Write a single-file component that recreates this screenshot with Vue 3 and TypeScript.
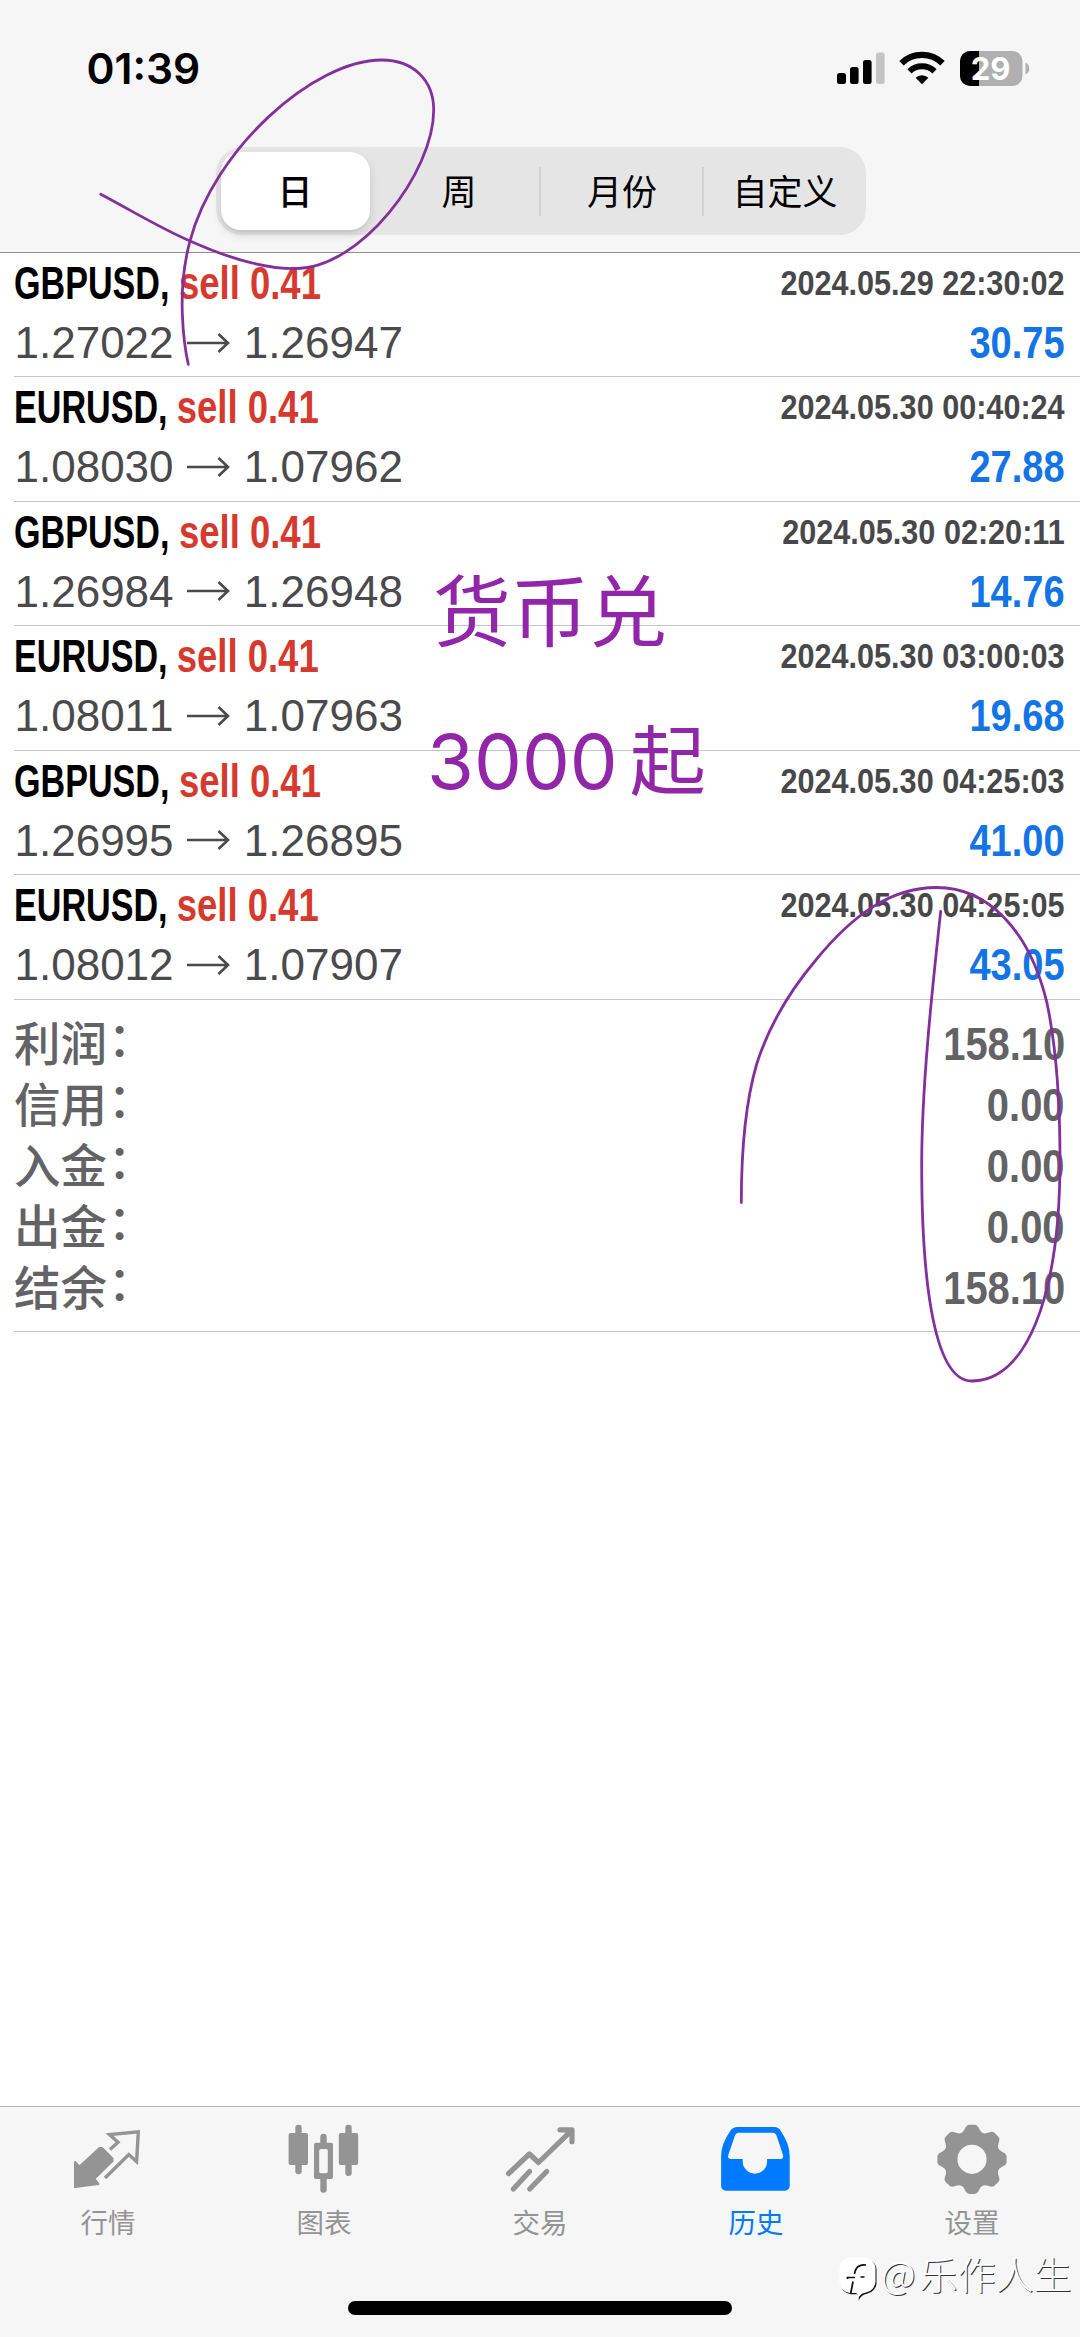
<script setup lang="ts">
interface Deal {
  symbol: string
  volume: string
  open: string
  close: string
  time: string
  profit: string
}

const periods: string[] = ['日', '周', '月份', '自定义']

const deals: Deal[] = [
  { symbol: 'GBPUSD', volume: '0.41', open: '1.27022', close: '1.26947', time: '2024.05.29 22:30:02', profit: '30.75' },
  { symbol: 'EURUSD', volume: '0.41', open: '1.08030', close: '1.07962', time: '2024.05.30 00:40:24', profit: '27.88' },
  { symbol: 'GBPUSD', volume: '0.41', open: '1.26984', close: '1.26948', time: '2024.05.30 02:20:11', profit: '14.76' },
  { symbol: 'EURUSD', volume: '0.41', open: '1.08011', close: '1.07963', time: '2024.05.30 03:00:03', profit: '19.68' },
  { symbol: 'GBPUSD', volume: '0.41', open: '1.26995', close: '1.26895', time: '2024.05.30 04:25:03', profit: '41.00' },
  { symbol: 'EURUSD', volume: '0.41', open: '1.08012', close: '1.07907', time: '2024.05.30 04:25:05', profit: '43.05' },
]

const totals: { label: string; value: string }[] = [
  { label: '利润', value: '158.10' },
  { label: '信用', value: '0.00' },
  { label: '入金', value: '0.00' },
  { label: '出金', value: '0.00' },
  { label: '结余', value: '158.10' },
]

const tabs: { id: string; label: string }[] = [
  { id: 'quotes', label: '行情' },
  { id: 'chart', label: '图表' },
  { id: 'trade', label: '交易' },
  { id: 'history', label: '历史' },
  { id: 'settings', label: '设置' },
]
const activeTab = 'history'

// Freehand pen loops drawn over the page
const penStrokes: string[] = [
  'M100.700 194.300C136 213 160 228 190 241C228 258 262 268.700 295 268.700C361 268.700 433.700 172 433.700 110C433.700 80 413 60 381.700 60C313 60 214 150 190 241C183 267 181.500 290 182.300 313C183 332 185 350 188.300 364.300',
  'M741.300 1202.500C741.300 1150 745 1104 756.700 1064C770 1022 793 987 816.700 959C852 916 890 887.500 936.700 887.500C988 887.500 1029 930 1046.700 1001.800C1056 1045 1060 1105 1060 1160C1060 1300 1025 1381 971.700 1381C930 1381 921.700 1260 921.700 1165C921.700 1090 931 1000 940.700 911.400',
]
</script>

<template>
  <div class="screen">
    <header class="top">
      <div class="status">
        <span class="clock">01:39</span>
        <svg class="status-icons" width="196" height="40" viewBox="0 0 196 40">
          <rect x="1" y="23" width="9" height="11" rx="2.5" />
          <rect x="14" y="17" width="8.6" height="17" rx="2.5" />
          <rect x="27" y="10" width="8.6" height="24" rx="2.5" />
          <rect x="40" y="2.5" width="8.6" height="31.5" rx="2.5" fill="#c4c4c4" />
          <g fill="none" stroke="#000">
            <path d="M65.500 13.200A29.500 29.500 0 0 1 106.500 13.200" stroke-width="6.400" />
            <path d="M73.500 21.400A18 18 0 0 1 98.500 21.400" stroke-width="6" />
          </g>
          <path d="M86 34.200L79.600 27.800A9.200 9.200 0 0 1 92.400 27.800Z" />
          <rect x="124" y="1" width="62.500" height="35" rx="10" fill="#b0b0b0" />
          <path d="M134 1H143V36H134A10 10 0 0 1 124 26V11A10 10 0 0 1 134 1Z" />
          <path d="M189.500 12.500C194.500 14.500 194.500 22.500 189.500 24.500Z" fill="#b0b0b0" />
          <text x="154.500" y="29.500" text-anchor="middle" class="battery">29</text>
        </svg>
      </div>
      <nav class="segments">
        <div v-for="(p, i) in periods" :key="p" class="segment" :class="{ on: i === 0 }">{{ p }}</div>
      </nav>
    </header>

    <main class="history">
      <section v-for="d in deals" :key="d.time" class="deal">
        <div class="line head">
          <span class="name">{{ d.symbol }}, <span class="vol">sell {{ d.volume }}</span></span>
          <span class="time">{{ d.time }}</span>
        </div>
        <div class="line body">
          <span class="prices">
            <span>{{ d.open }}</span>
            <svg class="arrow" width="44" height="24" viewBox="0 0 44 24">
              <path d="M1 12H42M32.500 3L42 12L32.500 21" />
            </svg>
            <span>{{ d.close }}</span>
          </span>
          <span class="profit">{{ d.profit }}</span>
        </div>
      </section>
      <section class="totals">
        <div v-for="t in totals" :key="t.label" class="total">
          <span class="label">{{ t.label }}<span class="colon">：</span></span>
          <span class="sum">{{ t.value }}</span>
        </div>
      </section>
    </main>

    <footer class="bottom">
      <nav class="tabs">
        <div v-for="t in tabs" :key="t.id" class="tab" :class="{ active: t.id === activeTab }">
          <svg class="icon" width="72" height="76" viewBox="0 0 72 76">
            <template v-if="t.id === 'quotes'">
              <path d="M38 29.500L46 22.300L37.500 14.500L66.300 11.800L64.600 41.500L56.800 34.500L33 58" fill="none" stroke="currentColor" stroke-width="3.400" />
              <path d="M3 42L7.500 46.500L27.500 28L30 28L40.500 38.500V41L22.400 58.700L26.500 64L3 67Z" fill="currentColor" stroke="currentColor" stroke-width="2" stroke-linejoin="round" />
            </template>
            <g v-else-if="t.id === 'chart'" fill="currentColor">
              <rect x="0.600" y="13" width="19.400" height="32" rx="2" />
              <rect x="7.300" y="4.700" width="6.400" height="49.600" rx="3" />
              <path fill-rule="evenodd" d="M28 22.700H43A2 2 0 0 1 45 24.700V57A2 2 0 0 1 43 59H28A2 2 0 0 1 26 57V24.700A2 2 0 0 1 28 22.700ZM33 29A1.800 1.800 0 0 0 31.200 30.800V51.500A1.800 1.800 0 0 0 33 53.300H38A1.800 1.800 0 0 0 39.800 51.500V30.800A1.800 1.800 0 0 0 38 29Z" />
              <path d="M32.300 24V17A3.200 3.200 0 0 1 38.700 17V24ZM32.300 58V69.500A3.200 3.200 0 0 0 38.700 69.500V58Z" />
              <rect x="50.800" y="13" width="19.400" height="32" rx="2" />
              <rect x="57.300" y="4.700" width="6.400" height="51.300" rx="3" />
            </g>
            <g v-else-if="t.id === 'trade'" fill="none" stroke="currentColor" stroke-width="5.200" stroke-linecap="round" stroke-linejoin="round">
              <path d="M4.600 53.500L25.400 34L34.500 42.500L67.700 10.300M56 9.800H68V21.700" />
              <path d="M9.400 69L25.500 51.500M25.700 69L42.700 51.500" />
            </g>
            <path v-else-if="t.id === 'history'" fill="currentColor" fill-rule="evenodd" d="M17.500 7H54.500Q58.500 7 60.500 10.500Q69.700 24 69.700 36V66A4.700 4.700 0 0 1 65 70.700H5.800A4.700 4.700 0 0 1 1.100 66V36Q1.100 24 10.500 10.500Q13 7 17.500 7ZM19 12.700Q16 12.700 15 15.500L8.300 35Q7.300 39 11 39H22.700V41.500A12.200 12.200 0 0 0 47.100 41.500V39H60Q64 39 63 35L56.500 15.500Q55.500 12.700 52.500 12.700Z" />
            <g v-else fill="currentColor">
              <path v-for="k in 8" :key="k" :transform="`rotate(${k * 45} 36 39.300)`" d="M24.500 13.500Q27.500 12 29 8.500Q30.500 4.700 33.500 4.700H38.500Q41.500 4.700 43 8.500Q44.500 12 47.500 13.500L42 24H30Z" />
              <circle cx="36" cy="39.300" r="21.200" fill="none" stroke="currentColor" stroke-width="13.200" />
            </g>
          </svg>
          <span class="tab-label">{{ t.label }}</span>
        </div>
      </nav>
      <div class="home-bar"></div>
    </footer>

    <svg class="pen" width="1080" height="2337" viewBox="0 0 1080 2337">
      <path v-for="(d, i) in penStrokes" :key="i" :d="d" />
    </svg>
    <div class="note note-a">货币兑</div>
    <div class="note note-b"><span class="digits">3000</span>起</div>

    <div class="credit">
      <svg class="credit-logo" width="44" height="52" viewBox="0 0 44 52">
        <path d="M13 5.500H27A11.500 11.500 0 0 1 38.500 17V30A11.500 11.500 0 0 1 29 40.500Q23 41.500 20.500 47.500Q21.500 42 19 41H13A11 11 0 0 1 2.500 30V17A11.500 11.500 0 0 1 13 5.500Z" fill="#0c0c0c" transform="translate(1 1.200)" />
        <path d="M13 5.500H27A11.500 11.500 0 0 1 38.500 17V30A11.500 11.500 0 0 1 29 40.500Q23 41.500 20.500 47.500Q21.500 42 19 41H13A11 11 0 0 1 2.500 30V17A11.500 11.500 0 0 1 13 5.500Z" fill="#fff" />
        <path d="M29 13C22.500 12 18.500 15 17.500 22M10.500 27V25.500H18M23.500 25H27.500M16 29.500L13.800 41" fill="none" stroke="#0c0c0c" stroke-width="1.700" />
      </svg>
      <span class="at">@</span><span>乐作人生</span>
    </div>
  </div>
</template>

<style>
body {
  margin: 0;
  background: #fff;
}
</style>

<style scoped>
.screen {
  position: relative;
  width: 1080px;
  height: 2337px;
  display: flex;
  flex-direction: column;
  overflow: hidden;
  background: #fff;
  font-family: "Liberation Sans", "Noto Sans CJK SC", sans-serif;
}
.top {
  box-sizing: border-box;
  height: 253px;
  flex: none;
  background: #f6f6f6;
  border-bottom: 1px solid #909092;
}
.status {
  height: 147px;
  box-sizing: border-box;
  padding: 44px 48px 0 86.500px;
  display: flex;
  justify-content: space-between;
}
.clock {
  font: 600 42.500px/50px Inter, sans-serif;
  color: #000;
}
.status-icons {
  margin-top: 6px;
}
.battery {
  font: 700 31px Inter, sans-serif;
  fill: #fff;
}
.segments {
  box-sizing: border-box;
  width: 650px;
  height: 88px;
  margin-left: 216px;
  padding: 5px 0 5px 4.500px;
  display: flex;
  align-items: center;
  border-radius: 26px;
  background: #e5e5e6;
}
.segment {
  box-sizing: border-box;
  flex: none;
  width: 163px;
  height: 49px;
  line-height: 45px;
  font-size: 35px;
  text-align: center;
  color: #000;
  font-family: "Noto Sans CJK SC", sans-serif;
}
.segment.on {
  width: 149px;
  height: 78px;
  line-height: 75px;
  margin-right: 8px;
  border-radius: 20px;
  background: #fff;
  font-weight: 500;
  box-shadow: 0 5px 10px rgba(0, 0, 0, 0.12), 0 2px 2px rgba(0, 0, 0, 0.04);
}
.segment + .segment + .segment {
  box-shadow: -2px 0 0 #d2d2d4;
}
.history {
  flex: 1;
}
.deal {
  box-sizing: border-box;
  height: 124.600px;
  margin-left: 14px;
  padding: 1px 15px 0 0;
  border-bottom: 1px solid #c4c4c6;
}
.deal:first-child {
  height: 124px;
}
.line {
  display: flex;
  justify-content: space-between;
  white-space: nowrap;
}
.head {
  height: 59px;
  line-height: 59px;
}
.body {
  height: 59px;
  line-height: 59px;
}
.name {
  font-size: 45.300px;
  font-weight: 700;
  color: #000;
  transform: scaleX(0.753);
  transform-origin: left;
}
.vol {
  display: inline-block;
  color: #d63a2e;
  transform: scaleX(1.07);
  transform-origin: left;
}
.time {
  font-size: 35.500px;
  font-weight: 700;
  color: #48484a;
  transform: scaleX(0.862);
  transform-origin: right;
}
.prices {
  display: flex;
  align-items: center;
  padding-left: 0.500px;
  font-size: 44px;
  font-kerning: none;
  color: #4a4a4c;
}
.arrow {
  margin: 0 14px 0 12.300px;
  fill: none;
  stroke: #4a4a4c;
  stroke-width: 2.600;
}
.profit {
  font-size: 45px;
  font-weight: 700;
  font-kerning: none;
  color: #1374e6;
  transform: scaleX(0.845);
  transform-origin: right;
}
.totals {
  box-sizing: border-box;
  height: 332px;
  margin-left: 14px;
  padding: 14px 15px 0 0;
  border-bottom: 1px solid #c4c4c6;
}
.total {
  height: 61px;
  line-height: 61px;
  display: flex;
  justify-content: space-between;
  color: #636365;
}
.label {
  height: 61px;
  line-height: 53px;
  font-family: "Noto Sans CJK SC", sans-serif;
  font-size: 46.500px;
  font-weight: 500;
}
.colon {
  position: relative;
  top: -5px;
  left: 1px;
}
.sum {
  font-size: 46.500px;
  font-weight: 700;
  font-kerning: none;
  transform: scaleX(0.858);
  transform-origin: right;
}
.bottom {
  box-sizing: border-box;
  height: 231px;
  flex: none;
  border-top: 1px solid #b4b4b6;
  background: #f6f6f6;
}
.tabs {
  display: flex;
  height: 194px;
}
.tab {
  width: 216px;
  padding-top: 13px;
  display: flex;
  flex-direction: column;
  align-items: center;
  color: #949494;
}
.tab.active {
  color: #007aff;
}
.icon {
  flex: none;
}
.tab-label {
  margin-top: 5px;
  font: 400 27.500px/40px "Noto Sans CJK SC", sans-serif;
}
.home-bar {
  width: 384px;
  height: 14px;
  margin: 0 auto;
  border-radius: 7px;
  background: #000;
}
.pen {
  position: absolute;
  left: 0;
  top: 0;
  fill: none;
  stroke: #84309c;
  stroke-width: 2.800;
  stroke-linecap: round;
  pointer-events: none;
}
.note {
  position: absolute;
  white-space: nowrap;
  color: #9127a8;
  font: 400 78px/100px "Noto Sans CJK SC", sans-serif;
}
.note-a {
  left: 433px;
  top: 557px;
}
.note-b {
  left: 427px;
  top: 706px;
  font-size: 76px;
}
.digits {
  font-family: Inter, sans-serif;
  margin-right: 12px;
}
.credit {
  position: absolute;
  left: 837px;
  top: 2252px;
  display: flex;
  align-items: flex-start;
  color: #fff;
  font: 300 38px/42px "Noto Sans CJK SC", sans-serif;
  text-shadow: 1px 1px 0 #333;
  white-space: nowrap;
}
.at {
  margin-right: 4px;
}
</style>
